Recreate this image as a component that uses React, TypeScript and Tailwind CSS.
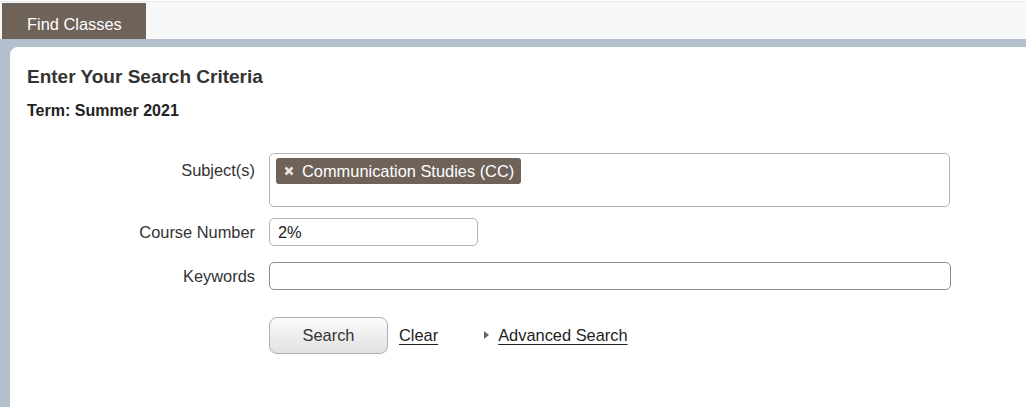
import React from 'react';

const labelCls = "w-[228px] shrink-0 text-right text-[16.4px] text-[#333]";

export default function App() {
  return (
    <div className="h-[407px] flex flex-col bg-white font-['Liberation_Sans',Arial,sans-serif] text-[#333] overflow-hidden">
      {/* tab strip */}
      <div className="h-[38px] shrink-0 flex items-end bg-[#f7f8fa] border-t border-[#e6e8eb] mt-[1px]">
        <div className="ml-[2px] w-[144px] h-[36px] bg-[#6e6259] text-white text-[16.4px] pl-[25px] pt-[6px] flex items-center">
          Find Classes
        </div>
      </div>

      {/* body frame */}
      <div className="flex-1 flex flex-col bg-[#b3bfcc] pt-[8px] pl-[10px]">
        <div className="flex-1 bg-white rounded-tl-[8px] pl-[17px] pt-[18px]">
          <h1 className="text-[19px] leading-[24px] font-bold text-[#333]">Enter Your Search Criteria</h1>
          <div className="mt-[12px] text-[16px] leading-[20px] font-bold text-[#222]">Term: Summer 2021</div>

          <div className="mt-[32px] flex flex-col">
            <div className="flex items-start gap-[14px]">
              <label className={labelCls + " pt-[5px]"}>Subject(s)</label>
              <div className="w-[681px] h-[54px] border border-[#b5b5b5] rounded-[5px] pl-[6px] pt-[4px]">
                <span className="inline-flex items-center h-[26px] rounded-[3px] bg-[#6e6259] text-white text-[16.4px] pl-[8px] pr-[7px]">
                  <svg width="10" height="10" viewBox="0 0 10 10" className="mr-[8px]">
                    <path d="M1.5 1.5 L8.5 8.5 M8.5 1.5 L1.5 8.5" stroke="#e8e4e1" strokeWidth="2.6" />
                  </svg>
                  Communication Studies (CC)
                </span>
              </div>
            </div>

            <div className="mt-[11px] flex items-center gap-[14px]">
              <label className={labelCls}>Course Number</label>
              <div className="w-[209px] h-[28px] border border-[#b5b5b5] rounded-[5px] pl-[8px] flex items-center text-[16.4px] text-[#222]">
                2%
              </div>
            </div>

            <div className="mt-[16px] flex items-center gap-[14px]">
              <label className={labelCls}>Keywords</label>
              <div className="w-[682px] h-[28px] border border-[#8f8f8f] rounded-[5px]" />
            </div>

            <div className="mt-[27px] flex items-center pl-[242px]">
              <button className="w-[119px] h-[37px] rounded-[8px] border border-[#b0b0b0] bg-gradient-to-b from-[#fbfbfb] to-[#e1e1e1] text-[16.4px] text-[#333]">
                Search
              </button>
              <a className="ml-[11px] text-[16.4px] text-[#222] underline underline-offset-[3px]">Clear</a>
              <span className="ml-[46px] flex items-center text-[16.4px] text-[#222]">
                <svg width="5" height="8" viewBox="0 0 5 8" className="mr-[9px]">
                  <path d="M0 0 L5 4 L0 8 Z" fill="#666" />
                </svg>
                <a className="underline underline-offset-[3px]">Advanced Search</a>
              </span>
            </div>
          </div>
        </div>
      </div>
    </div>
  );
}
